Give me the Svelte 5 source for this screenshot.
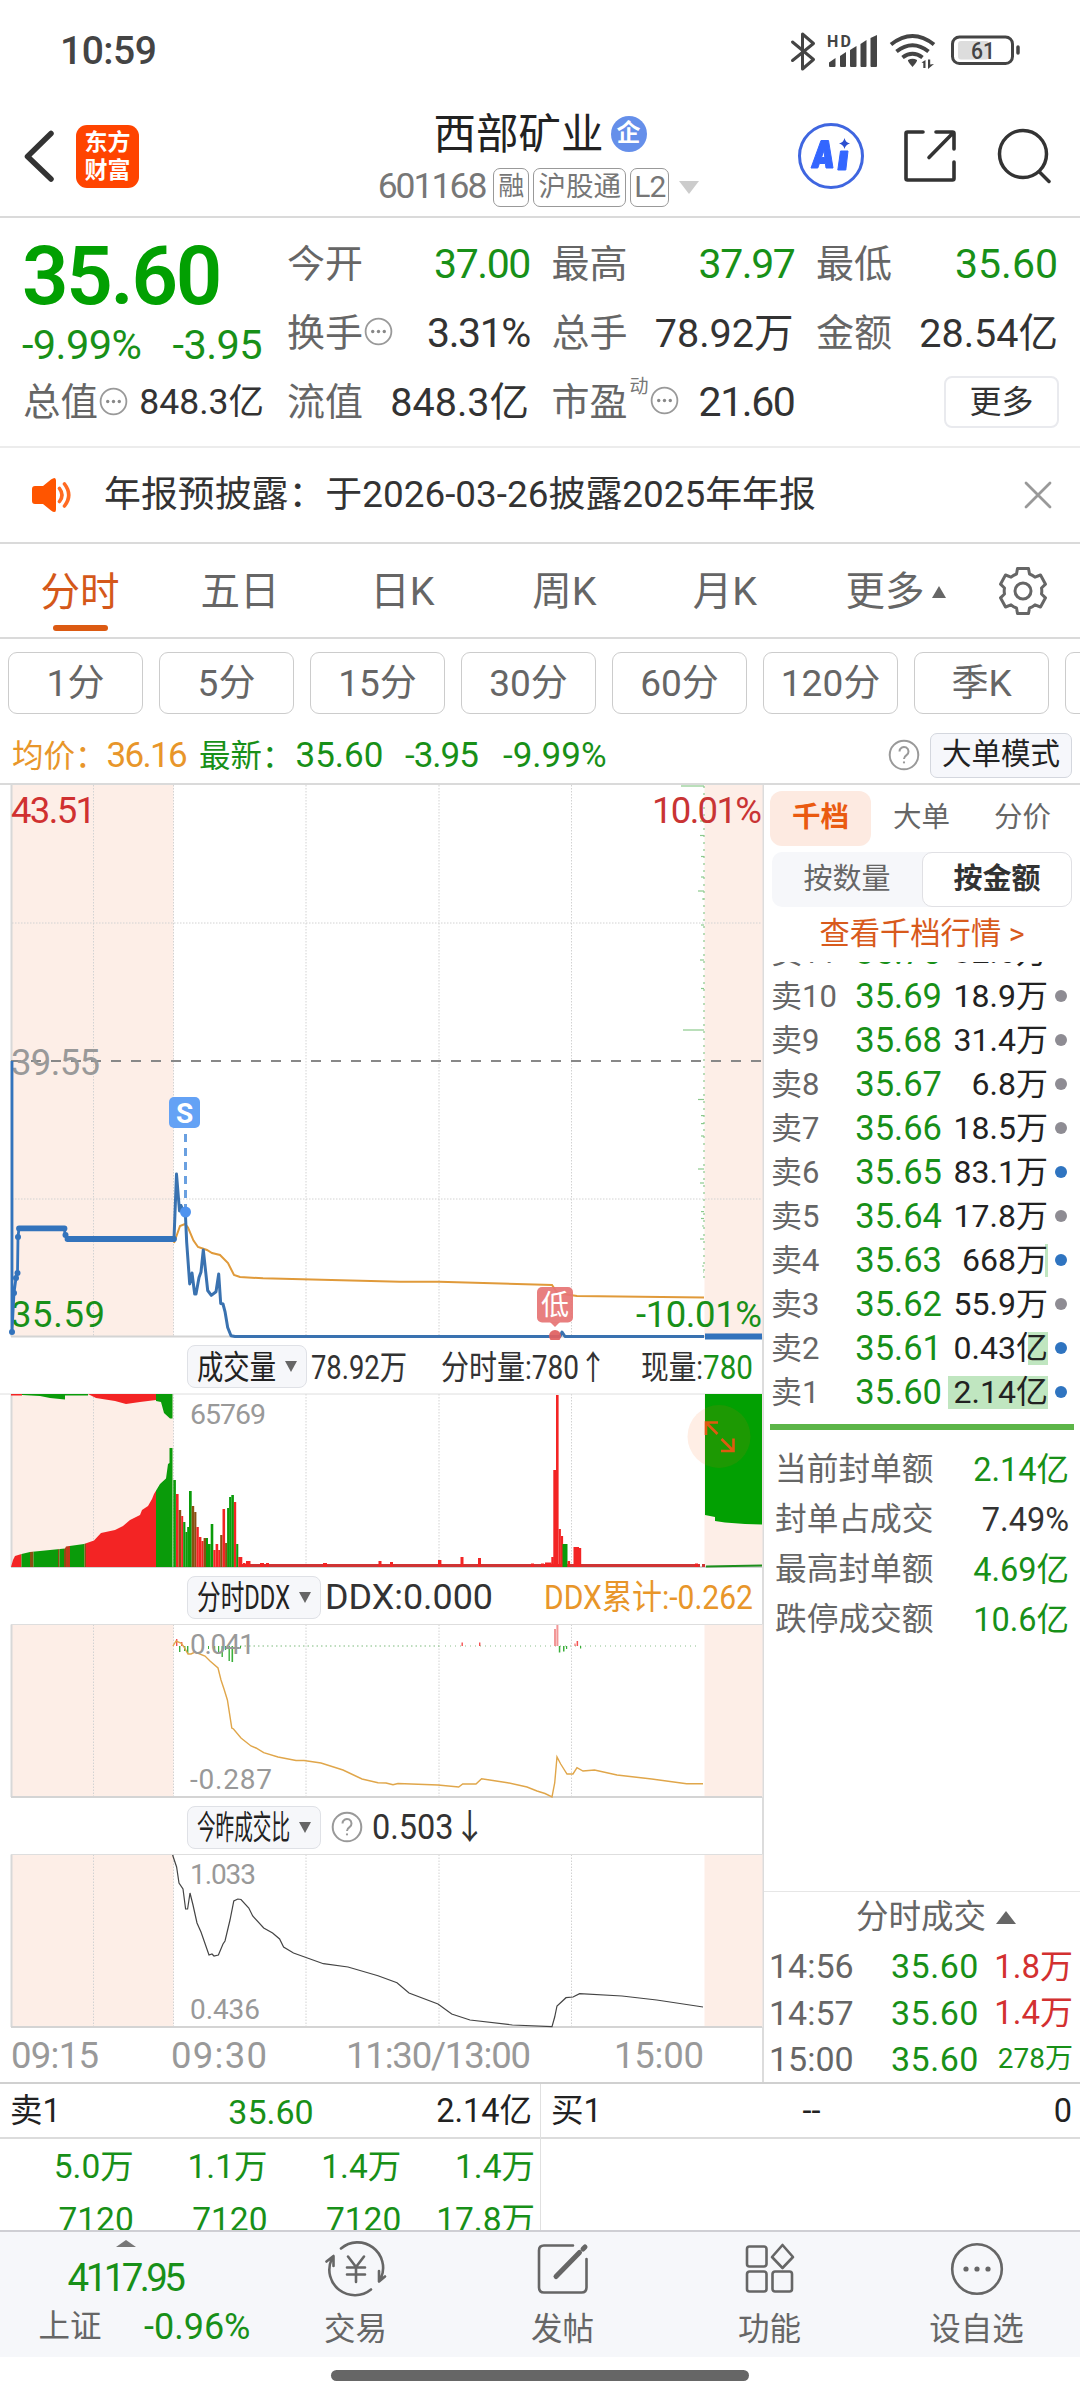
<script lang="ts">
    type Bar = [number, number, number, string];

    // --- Quote header ---
    const quotes = [
        { label: '今开', value: '37.00', tone: 'down', tight: true },
        { label: '最高', value: '37.97', tone: 'down', tight: true },
        { label: '最低', value: '35.60', tone: 'down' },
        { label: '换手', value: '3.31%', tone: 'dark', tight: true, hint: true },
        { label: '总手', value: '78.92万', tone: 'dark' },
        { label: '金额', value: '28.54亿', tone: 'dark' },
        { label: '流值', value: '848.3亿', tone: 'dark' },
        { label: '市盈', value: '21.60', tone: 'dark', tight: true, hint: true, sup: '动' }
    ];

    const periods = ['五日', '日K', '周K', '月K'];
    const minutes = ['1分', '5分', '15分', '30分', '60分', '120分', '季K', ''];

    // --- Order book ---
    const asks = [
        { n: 11, price: '35.70', amount: '32.6万', big: false, depth: 0 },
        { n: 10, price: '35.69', amount: '18.9万', big: false, depth: 0 },
        { n: 9, price: '35.68', amount: '31.4万', big: false, depth: 0 },
        { n: 8, price: '35.67', amount: '6.8万', big: false, depth: 0 },
        { n: 7, price: '35.66', amount: '18.5万', big: false, depth: 0 },
        { n: 6, price: '35.65', amount: '83.1万', big: true, depth: 0 },
        { n: 5, price: '35.64', amount: '17.8万', big: false, depth: 0 },
        { n: 4, price: '35.63', amount: '668万', big: true, depth: 3 },
        { n: 3, price: '35.62', amount: '55.9万', big: false, depth: 0 },
        { n: 2, price: '35.61', amount: '0.43亿', big: true, depth: 20 },
        { n: 1, price: '35.60', amount: '2.14亿', big: true, depth: 100 }
    ];

    const limits = [
        { label: '当前封单额', value: '2.14亿', tone: 'down' },
        { label: '封单占成交', value: '7.49%', tone: 'dark' },
        { label: '最高封单额', value: '4.69亿', tone: 'down' },
        { label: '跌停成交额', value: '10.6亿', tone: 'down' }
    ];

    const ticks = [
        { time: '14:56', price: '35.60', amount: '1.8万', tone: 'up' },
        { time: '14:57', price: '35.60', amount: '1.4万', tone: 'up' },
        { time: '15:00', price: '35.60', amount: '278万', tone: 'down', small: true }
    ];

    const queue = ['5.0万', '1.1万', '1.4万', '1.4万', '7120', '7120', '7120', '17.8万'];

    // --- Charts ---
    const gridX = [93.5, 173.5, 306, 439, 571.5];

    const avgLine =
        '174,1243 180,1226 185,1224 188,1227.6 193.5,1240.6 198,1247 207,1250 212,1253 220,1255 228,1263 234,1275 240,1277 263,1278.3 400,1281.7 439,1281.7 552,1285 556,1291 560,1293.6 577,1296 704,1297.4';
    const auctionLine =
        '12,1061 12,1332 14,1293 16,1278 17.5,1273 18,1237 19,1228.4 64.5,1228.4 65,1235 67.5,1239 174,1239';
    const priceLine =
        '174,1239 176.5,1174 179.5,1211 181,1205.5 185.5,1216.5 186.7,1242.5 189.7,1284 192,1273 194.7,1294 196,1294 199,1277.6 201,1272 203.3,1250 207.7,1290.5 211.3,1295.4 216,1291.7 218.7,1274 220.7,1303.5 223,1304 225,1311.6 227.7,1327.5 231,1335.7 235,1336.5 560,1336.5 562,1332 565,1336.5 704,1336.5';
    const ddxLine =
        '173,1646 176,1641 181,1643 184,1647 188,1654 191,1654 195,1652 205,1656 210,1661 218,1668 221,1680 224,1689 227.4,1700 231.8,1728 233.5,1729 241,1738 251,1746 256,1748 263.7,1752.7 278,1757 296,1760.5 304,1760.5 321,1763 343,1770 362,1779 378,1782.7 386,1783 393,1784.7 398,1783.5 438,1785 458.7,1787 462.7,1784 476,1784 481.6,1778.7 507.5,1782.7 527,1787 537,1791 545,1793.5 552,1797 554.7,1783 557,1757 560.7,1764 567,1774 573,1774 577,1767.7 583,1771 594.5,1770 617,1775 651.7,1779 686.6,1783.7 703,1783.7';
    const ratioLine =
        '172.6,1855 176.6,1867 179,1883 183,1889 185.6,1909 187.6,1909 190,1893 193,1905 197,1923 201,1932 209,1955 212,1954 214,1956 218.4,1955 223,1944 225,1941 230,1920 233.8,1901 237.8,1899 241,1899.5 248.8,1908 252.7,1916 263.7,1928 272.6,1933 279.6,1939 283.6,1947 293.5,1953 323.4,1963.7 348,1967 378,1975.7 397,1982.7 409,1993 438,2004 451.7,2014 470,2020 512.4,2025 552,2026.7 554.7,2017 557,2006 566,1997.7 573,1997 579.6,1993.7 622,1996 656.7,2000 696.5,2006 703,2007';

    const red = '#f32424';
    const green = '#0a9b0a';
    const mixed = '#8a4f12';

    // x, width, top, colour; every bar stands on the 1567 baseline
    const volumeBars: Bar[] = [
        [173.3, 2.6, 1480, green], [176, 2.6, 1494, red], [178.6, 2.6, 1510, mixed], [181.2, 2, 1516, red],
        [183.2, 2.2, 1522, green], [185.4, 2, 1532, green], [187.2, 2, 1527, green], [189, 2.7, 1491, green],
        [191.7, 2.5, 1506, mixed], [194.2, 2.2, 1512, mixed], [196.4, 2.4, 1527, red], [198.8, 2.6, 1537, red],
        [201.4, 2.2, 1541, red], [203.6, 2.4, 1538, mixed], [206, 2, 1538, green], [208, 2.7, 1544, green],
        [210.7, 2.6, 1524, green], [213.3, 2.3, 1550, red], [215.6, 2.6, 1544, red], [218.2, 2, 1550, red],
        [220.2, 2.3, 1535, mixed], [222.5, 2.6, 1509, red], [225.1, 2, 1543, mixed], [227.1, 2, 1508, green],
        [229.1, 2.2, 1497, green], [231.3, 2.6, 1495, green], [233.9, 2.3, 1502, red], [236.2, 2.1, 1544, green],
        [238.3, 4, 1557, red], [243, 2.5, 1563, red], [246, 4.5, 1561, red], [260, 4, 1563, red], [266, 3, 1563, red],
        [323, 4, 1563, red], [378.5, 3, 1561, red], [390, 3, 1562, red], [438, 3.4, 1560, red], [460.5, 3, 1557, red],
        [478, 3, 1558, red], [531, 3, 1563.5, red], [541, 3, 1563.5, red], [545, 6.5, 1562.5, red], [551.3, 2.5, 1557, red],
        [553.3, 2.7, 1470, red], [556, 2.6, 1395, red], [558.6, 2.3, 1529, red], [560.9, 2.2, 1536, red],
        [562.5, 5, 1544, green], [567.5, 2.6, 1561, red], [573.5, 5.5, 1547, red], [579, 2.2, 1548, red], [695, 3, 1563.5, red]
    ];

    // colour bands of the opening auction, clipped by its contour
    const auctionBands: [number, number, string][] = [
        [11, 10.5, red], [21.5, 8.5, green], [30, 3.5, mixed], [33.5, 24.5, green], [58, 1.5, mixed], [59.5, 4.5, green],
        [64, 2, mixed], [66, 4, '#c2361a'], [70, 14.5, green], [84.5, 1.5, mixed], [86, 70, red], [156, 17, green]
    ];

    const ddxBars: Bar[] = [
        [179, 1.4, 1652, green], [184, 1.4, 1651, green], [187, 1.4, 1654, green], [208, 1, 1649, green], [214, 1.2, 1650, green],
        [218, 1.2, 1652, green], [221.5, 1.4, 1657, green], [225, 1.2, 1650, green], [228.5, 1.4, 1661, green], [231.5, 1.6, 1662, green],
        [235.5, 1.2, 1650, green], [240, 1, 1648.5, green], [176, 1.4, 1639, red], [181, 1.4, 1642, red], [461.5, 1.4, 1642.5, red],
        [479, 1.4, 1642.5, red], [554, 2, 1629, '#ef7d7d'], [556.4, 2, 1625, '#ef7d7d'], [558.8, 1.5, 1652.5, green],
        [563, 1.5, 1651.5, green], [566, 1.2, 1649, green], [574.5, 1, 1643.5, red], [576.6, 1.5, 1641, red], [580, 1.2, 1648.5, green]
    ];

    // y, length of the price distribution marks next to the 15:00 line
    const marks: [number, number][] = [
        [786, 23], [821, 4], [835.5, 4], [856.5, 3], [877, 3], [891, 6], [899, 2], [925, 3], [960, 4], [988.5, 3], [1030, 21],
        [1099.5, 6], [1115.6, 3], [1123.6, 3], [1136, 3], [1169, 6], [1183, 4], [1211.6, 3], [1218.5, 3], [1226, 2],
        [1239, 4], [1266, 2], [1272, 1]
    ];
</script>

{#snippet fit(text: string, width: number, size: number, tone: string)}
    <svg class="fit {tone}" {width} height="44" viewBox="0 0 {width} 44">
        <text x="0" y="33.5" font-size={size} textLength={width} lengthAdjust="spacingAndGlyphs">{text}</text>
    </svg>
{/snippet}

{#snippet dots()}
    <svg class="dots" width="29" height="29" viewBox="0 0 29 29">
        <circle cx="14.5" cy="14.5" r="12.9" fill="none" stroke="#999" stroke-width="1.8" />
        <g fill="#888"><circle cx="8.7" cy="14.5" r="1.7" /><circle cx="14.5" cy="14.5" r="1.7" /><circle cx="20.3" cy="14.5" r="1.7" /></g>
    </svg>
{/snippet}

{#snippet help()}
    <svg class="help" width="32" height="32" viewBox="0 0 32 32" fill="none" stroke="#999" stroke-width="2">
        <circle cx="16" cy="16" r="14.3" />
        <path d="M11.5 12.5a4.5 4.5 0 1 1 7 3.7c-1.8 1.2-2.5 2-2.5 3.8" />
        <circle cx="16" cy="23.4" r="1.1" fill="#999" stroke="none" />
    </svg>
{/snippet}

{#snippet frame(top: number, bottom: number)}
    <rect x="12" y={top} width="161.5" height={bottom - top} fill="#fdeee7" />
    <rect x="704.5" y={top} width="58" height={bottom - top} fill="#fdeee7" />
    <g stroke="#d2d2d2" stroke-dasharray="1.5 1.5">
        {#each gridX as x}
            <line x1={x} x2={x} y1={top} y2={bottom} />
        {/each}
    </g>
    <path d="M11.5 {top}V{bottom}" stroke="#d8d8d8" stroke-width="2" />
    <path d="M11 {bottom}H762" stroke="#d4d4d4" stroke-width="2" />
{/snippet}

<div class="screen">
    <div class="status">
        <span class="clock">10:59</span>
        <svg width="232" height="42" viewBox="788 30 232 42" fill="none" stroke="#444" stroke-width="3" stroke-linecap="round" stroke-linejoin="round">
            <path d="M792.5 42 813.5 59.5 802.5 69V34L813.5 43.5 792.5 60.5" />
            <g fill="#444" stroke="none">
                <path d="M829 62.5 835.5 58V66q0 1-1 1h-4.500q-1 0-1-1zM840 56 846 52V66q0 1-1 1h-4q-1 0-1-1zM850 50 856.500 46V66q0 1-1 1h-4.500q-1 0-1-1zM860.500 44 866.500 40V66q0 1-1 1h-4q-1 0-1-1zM870.500 38 877 35V66q0 1-1 1h-4.500q-1 0-1-1z" />
                <text x="827" y="46.500" font-size="16" font-weight="700" textLength="24">HD</text>
                <path d="M908 60q4.500-2.500 9 0 .8 1-4.500 7-5.300-6-4.500-7z" />
                <path d="M921.500 62.500l4-2.500v8h-2.200v-5zM928 59.500h2.200v5l3.800-.5-6 5z" />
            </g>
            <g stroke-width="4" stroke-linecap="butt">
                <path d="M891 44.500q21.500-17 43 0M896.500 51.500q16-12.500 32 0M902.500 57.500q10-7.500 20 0" />
            </g>
            <rect x="952.500" y="37" width="60" height="26.500" rx="7" />
            <rect x="958" y="41" width="31" height="18.500" rx="3" fill="#ddd" stroke="none" />
            <text x="971" y="58.500" font-size="23" font-weight="500" fill="#444" stroke="none" textLength="24" lengthAdjust="spacingAndGlyphs">61</text>
            <path d="M1018 47v6" stroke-width="3.500" />
        </svg>
    </div>

    <header class="topbar">
        <div class="side">
            <svg width="34" height="56" viewBox="0 0 34 56" fill="none" stroke="#333" stroke-width="5.500" stroke-linecap="round" stroke-linejoin="round">
                <path d="M29 5.500 5.500 28.500 29 51" />
            </svg>
            <div class="logo"><span>东方</span><span>财富</span></div>
        </div>
        <div class="title">
            <div class="name">西部矿业<i>企</i></div>
            <div class="code">
                <span class="digits">601168</span>
                <b>融</b><b class="wide">沪股通</b><b class="lv">L2</b>
                <svg width="20" height="13" viewBox="0 0 20 13"><path d="M0 0h20L10 13z" fill="#ccc" /></svg>
            </div>
        </div>
        <div class="tools">
            <svg width="68" height="68" viewBox="0 0 68 68">
                <circle cx="34" cy="34" r="31.500" fill="none" stroke="#3f66e0" stroke-width="3" />
                <path d="M14 46 24 18.500h7.500L36 46h-7l-.6-4.500h-6L20.800 46zM24.500 35.500h3.300l-.8-7z" fill="#3366ff" fill-rule="evenodd" stroke="#3366ff" stroke-width="1" stroke-linejoin="round" />
                <path d="M43.500 29h7.500l-2.200 19h-8z" fill="#3366ff" stroke="#3366ff" stroke-width="1" stroke-linejoin="round" />
                <path d="M47.500 16q1 4.500 5.500 5.500-4.500 1-5.500 5.500-1-4.500-5.500-5.500 4.500-1 5.500-5.500z" fill="#2c4fd0" />
            </svg>
            <svg width="56" height="56" viewBox="0 0 56 56" fill="none" stroke="#333" stroke-width="3.600" stroke-linecap="round" stroke-linejoin="round">
                <path d="M21 4H5.500Q4 4 4 5.500v45Q4 52 5.500 52h45q1.500 0 1.500-1.500V34M34 4h16.500Q52 4 52 5.500V21M51 5 27 29.500" />
            </svg>
            <svg width="56" height="58" viewBox="0 0 56 58" fill="none" stroke="#333" stroke-width="3.500" stroke-linecap="round">
                <circle cx="28" cy="27" r="23.500" /><path d="M44.500 45 54 54.500" />
            </svg>
        </div>
    </header>

    <section class="quote">
        <div class="last">
            <div class="price">35.60</div>
            <div class="change"><span>-9.99%</span><span>-3.95</span></div>
            <div class="cap"><span class="lbl">总值</span>{@render dots()}<span class="val">848.3亿</span></div>
        </div>
        <div class="grid">
            {#each quotes as q}
                <div class="cell">
                    <span class="lbl">{q.label}</span>
                    {#if q.sup}<sup>{q.sup}</sup>{/if}
                    {#if q.hint}{@render dots()}{/if}
                    <span class="val {q.tone}" class:tight={q.tight} class:cjk={/[万亿]/.test(q.value)}>{q.value}</span>
                </div>
            {/each}
            <div class="cell more"><button>更多</button></div>
        </div>
    </section>

    <section class="notice">
        <svg width="42" height="36" viewBox="0 0 42 36">
            <path d="M1 12q0-3 3-3h8L20 2.500q5-3.500 5 1v29q0 4.500-5 1L12 27H4q-3 0-3-3z" fill="#ff5500" />
            <path d="M28.500 11.500q5 6.500 0 13M33.500 7q8.500 11 0 22" fill="none" stroke="#ff6a22" stroke-width="3.600" stroke-linecap="round" />
        </svg>
        <p>年报预披露：于2026-03-26披露2025年年报</p>
        <svg width="28" height="28" viewBox="0 0 28 28" stroke="#999" stroke-width="2.800" stroke-linecap="round"><path d="M2 2 26 26M26 2 2 26" /></svg>
    </section>

    <nav class="periods">
        <span class="active">分时</span>
        {#each periods as p}
            <span>{p}</span>
        {/each}
        <span class="drop">更多<svg width="14" height="12" viewBox="0 0 14 12"><path d="M7 0 14 12H0z" fill="#666" /></svg></span>
        <svg class="gear" width="50" height="50" viewBox="-25 -25 50 50" fill="none" stroke="#666" stroke-width="3" stroke-linejoin="round">
            <path d="M-5.500-22.500h11l1 5.500q3 1 5.500 3.200l5.500-2.200 5 9.200-4 3.800q.6 3 0 6l4 3.800-5 9.200-5.500-2.200q-2.500 2.200-5.500 3.200l-1 5.500h-11l-1-5.500q-3-1-5.500-3.200l-5.500 2.200-5-9.200 4-3.800q-.6-3 0-6l-4-3.800 5-9.200 5.500 2.200q2.500-2.200 5.500-3.200z" />
            <circle r="8" />
        </svg>
    </nav>

    <div class="minutes">
        {#each minutes as m}
            <button>{m}</button>
        {/each}
    </div>

    <div class="info">
        <span class="avg">均价：<em>36.16</em></span>
        <span class="down now">最新：<em>35.60</em></span>
        <em class="down diff">-3.95</em>
        <em class="down">-9.99%</em>
        <span class="grow"></span>
        {@render help()}
        <button>大单模式</button>
    </div>

    <main>
        <div class="charts">
            <svg class="plot" width="763" height="555" viewBox="0 785 763 555">
                {@render frame(785, 1336.5)}
                <g stroke="#d2d2d2" stroke-dasharray="1.500 1.500"><path d="M12 923H762M12 1199H762" /></g>
                <path d="M11 1061H762" stroke="#888" stroke-width="2" stroke-dasharray="10 10" />
                <g stroke="#8cc98c" stroke-width="1.200">
                    <line x1="704" x2="704" y1="786" y2="1280" stroke-dasharray="2 5" />
                    {#each marks as [y, len]}
                        <line x1={704 - len} x2="704" y1={y} y2={y} />
                    {/each}
                </g>
                <g font-size="36.500">
                    <text x="11" y="822.500" fill="#d03030" textLength="85">43.51</text>
                    <text x="652" y="823" fill="#c93434" textLength="110">10.01%</text>
                    <text x="11" y="1075" fill="#999" textLength="89">39.55</text>
                    <text x="11" y="1327" fill="#189018" textLength="94">35.59</text>
                    <text x="636" y="1326.500" fill="#189018" textLength="126">-10.01%</text>
                </g>
                <polyline points={avgLine} fill="none" stroke="#e09a3a" stroke-width="2" />
                <polyline points={auctionLine} fill="none" stroke="#3373bc" stroke-width="2.800" stroke-linejoin="round" />
                <path d="M19 1228.400H64.500M67.500 1239H174" stroke="#3373bc" stroke-width="5.800" stroke-linecap="round" />
                <g fill="#3373bc">
                    <circle cx="12" cy="1332" r="3" /><circle cx="14" cy="1293" r="3" /><circle cx="16" cy="1278" r="3" />
                    <circle cx="17.500" cy="1273" r="3" /><circle cx="18" cy="1237" r="3" /><circle cx="65.500" cy="1235" r="3" />
                </g>
                <polyline points={priceLine} fill="none" stroke="#3a72b0" stroke-width="3" stroke-linejoin="round" />
                <path d="M705 1336.500H762" stroke="#3373bc" stroke-width="6" />
                <path d="M185.500 1134V1210" stroke="#6aa0e0" stroke-width="3" stroke-dasharray="8 6" />
                <circle cx="185.500" cy="1212" r="5.500" fill="#4f93ef" />
                <rect x="169" y="1097" width="31" height="31" rx="5" fill="#64a2f5" />
                <text x="184.500" y="1122.500" font-size="28" font-weight="700" fill="#fff" text-anchor="middle">S</text>
                <g fill="#e67575" fill-opacity="0.930">
                    <rect x="537" y="1287" width="36" height="35.500" rx="5" />
                    <path d="M550 1322h10l-5 5z" />
                    <circle cx="555" cy="1336" r="6" fill="#e06060" />
                </g>
                <text x="555" y="1315" font-size="28" fill="#fff" text-anchor="middle">低</text>
            </svg>

            <div class="head">
                <span class="pick">{@render fit('成交量', 79, 33, 'black')}<i></i></span>
                {@render fit('78.92万', 96, 33.5, 'dark')}
                <span class="gap-a"></span>
                {@render fit('分时量:780↑', 166, 33.5, 'dark')}
                <span class="grow"></span>
                {@render fit('现量:', 62, 33.5, 'dark')}
                {@render fit('780', 50, 34, 'down')}
            </div>
            <svg class="plot" width="763" height="178" viewBox="0 1393 763 178">
                {@render frame(1394, 1567)}
                <path d="M0 1394H762" stroke="#dedede" />
                <clipPath id="auction">
                    <path d="M11 1567 13 1560 15 1556 21.500 1554 30 1552 50 1550 65 1548.500 66 1546.500 84 1544 94 1540.500 101 1533 115 1530 123 1526 130 1520 140 1515 142 1510 148 1506 152 1499 154 1494 157 1489 160 1484 166 1478.500 168 1464 169.500 1463V1448H172.500V1567z" />
                </clipPath>
                <g clip-path="url(#auction)">
                    {#each auctionBands as [x, w, fill]}
                        <rect {x} y="1440" width={w} height="127" {fill} />
                    {/each}
                </g>
                <path d="M11 1394H22V1395.500H11zM88 1394H156V1400L140 1402 126 1404 115 1401 96 1398z" fill={red} />
                <path d="M22 1394H65V1399.500L50 1398 40 1396 22 1395zM65 1394H88V1395.500H65zM156 1394H172.500V1418.500H170L164 1413 161 1402 156 1401z" fill={green} />
                <path d="M240 1565.500H700M702 1565.500H705" stroke="#cf3434" stroke-width="3" />
                {#each volumeBars as [x, w, y, fill]}
                    <rect {x} {y} width={w} height={1567 - y} {fill} />
                {/each}
                <path d="M705 1394H762V1524.500L745 1524 725 1522.500 715 1521V1517L705 1515z" fill="#02a002" />
                <path d="M706 1566.500 762 1565.500" stroke="#1c8f1c" stroke-width="2" />
                <circle cx="719" cy="1436.500" r="31.500" fill="#ff6010" fill-opacity="0.110" />
                <path d="M717.500 1434 706 1422.500M706 1435V1422.500H718M721.500 1439 733.500 1451M733.500 1438.500V1451H721" fill="none" stroke="#df5a10" stroke-width="2.600" />
                <text x="190" y="1424" font-size="28.500" fill="#999" textLength="76">65769</text>
            </svg>

            <div class="head">
                <span class="pick">{@render fit('分时DDX', 93, 33, 'black')}<i></i></span>
                {@render fit('DDX:0.000', 168, 34.5, 'dark')}
                <span class="grow"></span>
                {@render fit('DDX累计:-0.262', 209, 34, 'orange')}
            </div>
            <svg class="plot" width="763" height="178" viewBox="0 1623 763 178">
                {@render frame(1624.500, 1797)}
                <path d="M11 1624.500H762" stroke="#dedede" />
                <path d="M240 1646H440" stroke="#7dbb7d" stroke-dasharray="1.500 3" />
                <path d="M445 1646H700" stroke="#8cc08c" stroke-dasharray="1 4" />
                {#each ddxBars as [x, w, y, fill]}
                    <rect {x} y={Math.min(y, 1646)} width={w} height={Math.abs(y - 1646)} {fill} opacity="0.800" />
                {/each}
                <polyline points={ddxLine} fill="none" stroke="#e0a64a" stroke-width="1.400" />
                <text x="190" y="1653.500" font-size="28" fill="#999" textLength="65">0.041</text>
                <text x="190" y="1789" font-size="28" fill="#999" textLength="82">-0.287</text>
            </svg>

            <div class="head">
                <span class="pick">{@render fit('今昨成交比', 93, 33, 'black')}<i></i></span>
                {@render help()}
                {@render fit('0.503↓', 114, 34.5, 'dark')}
            </div>
            <svg class="plot" width="763" height="228" viewBox="0 1853 763 228">
                {@render frame(1854.500, 2027)}
                <path d="M11 1854.500H762" stroke="#dedede" />
                <polyline points={ratioLine} fill="none" stroke="#444" stroke-width="1.200" />
                <g font-size="28" fill="#999">
                    <text x="190" y="1884" textLength="66">1.033</text>
                    <text x="190" y="2019" textLength="70">0.436</text>
                </g>
                <g font-size="36.500" fill="#999">
                    <text x="11" y="2068" textLength="88">09:15</text>
                    <text x="171" y="2068" textLength="96">09:30</text>
                    <text x="346" y="2068" textLength="185">11:30/13:00</text>
                    <text x="614" y="2068" textLength="90">15:00</text>
                </g>
            </svg>
        </div>

        <aside>
            <div class="tabs"><span class="active">千档</span><span>大单</span><span>分价</span></div>
            <div class="switch"><span>按数量</span><span class="active">按金额</span></div>
            <a class="link" href="#book">查看千档行情 &gt;</a>
            <ul class="book">
                {#each asks as a (a.n)}
                    <li>
                        <span class="lv">卖{a.n}</span>
                        <span class="px">{a.price}</span>
                        <span class="amt"><i style="width: {a.depth}px"></i><b>{a.amount}</b></span>
                        <span class="dot" class:big={a.big}></span>
                    </li>
                {/each}
            </ul>
            <div class="rule"></div>
            <ul class="limits">
                {#each limits as l}
                    <li><span>{l.label}</span><b class={l.tone}>{l.value}</b></li>
                {/each}
            </ul>
            <div class="trades">
                <h3>分时成交<svg width="20" height="13" viewBox="0 0 20 13"><path d="M10 0 20 13H0z" fill="#666" /></svg></h3>
                {#each ticks as t}
                    <div class="tick">
                        <span>{t.time}</span><span class="down px">{t.price}</span><span class="qty {t.tone}" class:small={t.small}>{t.amount}</span>
                    </div>
                {/each}
            </div>
        </aside>
    </main>

    <section class="level">
        <div class="half">
            <div class="best"><span>卖1</span><span class="down mid">35.60</span><span>2.14亿</span></div>
            <div class="queue">
                {#each queue as q}
                    <span>{q}</span>
                {/each}
            </div>
        </div>
        <div class="half">
            <div class="best"><span>买1</span><span class="mid">--</span><span>0</span></div>
        </div>
    </section>

    <footer>
        <div class="index">
            <svg width="20" height="7" viewBox="0 0 20 7"><path d="M10 0 20 7H0z" fill="#777" /></svg>
            <strong>4117.95</strong>
            <div><span>上证</span><em>-0.96%</em></div>
        </div>
        <div class="item">
            <svg width="62" height="56" viewBox="-31 -28 62 56" fill="none" stroke="#666" stroke-width="2.600" stroke-linecap="round" stroke-linejoin="round">
                <path d="M-15-20.500A25.500 25.500 0 0 1 25 9M29 7.500 23 12.500V2M15 20.500A25.500 25.500 0 0 1-24.500-9.500M-29.500-7.500-22.500-13V-3" />
                <path d="M-8-12.500 0-2 8-12.500M0-2V13M-9-1.500H9M-9 5.500H9" />
            </svg>
            <span>交易</span>
        </div>
        <div class="item">
            <svg width="56" height="56" viewBox="-28 -28 56 56" fill="none" stroke="#666" stroke-width="2.600" stroke-linecap="round" stroke-linejoin="round">
                <path d="M10-23.500H-19Q-24-23.500-24-18.500V18.500Q-24 23.500-19 23.500H18.500Q23.500 23.500 23.500 18.500V-10" />
                <path d="M-7 7.500 16.500-16.500" stroke-width="5" /><path d="M20-20 22-22" stroke-width="5" />
            </svg>
            <span>发帖</span>
        </div>
        <div class="item">
            <svg width="56" height="56" viewBox="-28 -28 56 56" fill="none" stroke="#666" stroke-width="2.600" stroke-linejoin="round">
                <rect x="-23" y="-22.500" width="19.500" height="20" rx="2.500" /><rect x="-23" y="2.500" width="19.500" height="20" rx="2.500" />
                <rect x="2.500" y="2.500" width="19.500" height="20" rx="2.500" /><path d="M12.500-24 23-12 12.500-1 2-12z" />
            </svg>
            <span>功能</span>
        </div>
        <div class="item">
            <svg width="56" height="56" viewBox="-28 -28 56 56">
                <circle r="24.800" fill="none" stroke="#666" stroke-width="2.600" />
                <g fill="#666"><circle cx="-11" r="2.600" /><circle r="2.600" /><circle cx="11" r="2.600" /></g>
            </svg>
            <span>设自选</span>
        </div>
    </footer>
    <div class="home"><i></i></div>
</div>

<style>
    :global(body) {
        background: #fff;
    }

    .screen {
        width: 1080px;
        height: 2400px;
        overflow: hidden;
        display: flex;
        flex-direction: column;
        background: #fff;
        color: #333;
        font-family: Roboto, 'Noto Sans CJK SC', sans-serif;
        line-height: 1;
    }

    .screen :global(*) {
        box-sizing: border-box;
    }

    svg {
        display: block;
        flex: none;
    }

    .fit {
        overflow: visible;
    }

    button {
        font: inherit;
        color: inherit;
        background: none;
        padding: 0;
    }

    em,
    i,
    b {
        font-style: normal;
        font-weight: 400;
    }

    ul {
        list-style: none;
        margin: 0;
        padding: 0;
    }

    .down { color: #189018; fill: #189018; }
    .up { color: #d33030; }
    .dark { color: #333; fill: #333; }
    .black { fill: #222; }
    .orange { fill: #e8962a; }
    .grow { flex: 1; }

    /* --- status bar --- */
    .status {
        height: 102px;
        padding: 0 60px;
        display: flex;
        align-items: center;
        justify-content: space-between;
    }

    .clock {
        font-size: 39px;
        font-weight: 500;
        color: #444;
        letter-spacing: -0.5px;
    }

    /* --- top bar --- */
    .topbar {
        height: 116px;
        border-bottom: 2px solid #dadada;
        display: grid;
        grid-template-columns: 300px 1fr 300px;
    }

    .side {
        display: flex;
        align-items: center;
        gap: 20px;
        padding: 0 0 5px 22px;
        margin-top: 12px;
        height: 89px;
    }

    .logo {
        width: 63px;
        height: 63px;
        border-radius: 11px;
        background: #ff4400;
        color: #fff;
        font-size: 23px;
        font-weight: 700;
        display: flex;
        flex-direction: column;
        align-items: center;
        justify-content: center;
        gap: 5px;
    }

    .logo span {
        line-height: 23px;
        white-space: nowrap;
    }

    .title {
        display: flex;
        flex-direction: column;
        align-items: center;
        padding-top: 1px;
    }

    .name {
        height: 62px;
        padding-top: 2px;
        display: flex;
        align-items: center;
        gap: 7px;
        font-size: 42.5px;
        color: #222;
        white-space: nowrap;
    }

    .name i {
        width: 36px;
        height: 36px;
        margin-top: -2px;
        border-radius: 50%;
        background: #658fea;
        color: #fff;
        font-size: 24px;
        font-weight: 700;
        line-height: 34px;
        text-align: center;
    }

    .code {
        display: flex;
        align-items: center;
        gap: 4px;
        height: 44px;
        margin-left: -3px;
        font-size: 26px;
        color: #777;
    }

    .digits {
        font-size: 35.5px;
        letter-spacing: -2px;
        margin-right: 4px;
    }

    .code b {
        width: 36px;
        height: 39px;
        border: 1.5px solid #999;
        border-radius: 7px;
        line-height: 35px;
        text-align: center;
    }

    .code .wide { width: 93px; font-size: 27.5px; }
    .code .lv { width: 39px; font-size: 30px; letter-spacing: -1px; }
    .code svg { margin-left: 6px; }

    .tools {
        display: flex;
        align-items: center;
        gap: 37px;
        padding-left: 17px;
        height: 108px;
    }

    /* --- quote --- */
    .quote {
        height: 230px;
        display: flex;
        border-bottom: 2px solid #ececec;
    }

    .last {
        width: 265px;
        padding: 0 2px 0 24px;
        color: #189018;
    }

    .price {
        height: 92px;
        padding-top: 18px;
        margin-left: -2px;
        font-size: 81.5px;
        font-weight: 600;
        letter-spacing: -2.3px;
        color: #02a002;
    }

    .change {
        height: 57px;
        padding-top: 12px;
        display: flex;
        align-items: center;
        justify-content: space-between;
        margin-left: -2px;
        font-size: 41.5px;
        letter-spacing: -0.6px;
    }

    .cap {
        height: 69px;
        margin-top: 1px;
        display: flex;
        align-items: center;
    }

    .lbl {
        font-size: 38px;
        color: #666;
    }

    .cap .lbl { font-size: 37.5px; margin-left: -1px; }

    .dots { margin: -2px 0 0 1px; }

    .cap .val {
        margin-left: auto;
        margin-right: -2px;
        font-size: 35.5px;
        color: #333;
    }

    .grid {
        flex: 1;
        padding: 11px 24px 0 23px;
        display: grid;
        grid-template-columns: repeat(3, 240px);
        grid-template-rows: repeat(3, 69px);
        column-gap: 24.5px;
    }

    .cell {
        display: flex;
        align-items: center;
    }

    .cell .val {
        margin-left: auto;
        margin-right: -2px;
        padding-top: 2px;
        font-size: 41px;
    }

    .cell .tight {
        letter-spacing: -1.4px;
        margin-right: -3px;
    }

    .cell .cjk { font-size: 39.5px; }

    sup {
        align-self: flex-start;
        margin: 10px 0 0 2px;
        font-size: 19px;
        line-height: 20px;
        color: #777;
    }

    .more { justify-content: flex-end; }

    .more button {
        width: 115px;
        height: 52px;
        margin-right: -3px;
        border: 2px solid #e9eaee;
        border-radius: 8px;
        font-size: 32px;
    }

    /* --- notice --- */
    .notice {
        height: 96px;
        padding: 0 28px 0 31px;
        display: flex;
        align-items: center;
        border-bottom: 2px solid #dadada;
    }

    .notice p {
        flex: 1;
        margin: 1px 0 0 31px;
        font-size: 36.9px;
    }

    /* --- period tabs --- */
    .periods {
        height: 95px;
        display: grid;
        grid-template-columns: 160px 160px 165px 159px 162px 154px 1fr;
        align-items: center;
        justify-items: center;
        border-bottom: 2px solid #dadada;
        font-size: 39.5px;
        color: #666;
    }

    .periods span { padding-top: 2px; }

    .periods .active {
        height: 93px;
        display: flex;
        flex-direction: column;
        justify-content: space-between;
        align-items: center;
        color: #d4581a;
        padding: 29px 0 6px;
    }

    .periods .active::after {
        content: '';
        width: 55px;
        height: 6px;
        border-radius: 3px;
        background: #dc5a12;
    }

    .drop {
        display: flex;
        align-items: center;
        gap: 7px;
        margin-left: 25px;
    }

    .gear { margin-left: 6px; }

    .minutes {
        height: 76px;
        padding: 13px 0 0 8px;
        display: flex;
        gap: 16px;
        overflow: hidden;
    }

    .minutes button {
        flex: none;
        width: 135px;
        height: 62px;
        border: 1.5px solid #ccc;
        border-radius: 9px;
        font-size: 37px;
        color: #666;
    }

    /* --- price info line --- */
    .info {
        height: 70px;
        padding: 12px 8px 0 12px;
        display: flex;
        align-items: center;
        border-bottom: 2px solid #dadada;
        font-size: 31.5px;
        white-space: nowrap;
    }

    .info em { font-size: 35px; }
    .avg { width: 187px; color: #e8962a; letter-spacing: 0; }
    .avg em { letter-spacing: -1.7px; }
    .now { width: 206px; }
    .now em { margin-left: 2px; }
    .diff { width: 98px; letter-spacing: -1px; }

    .info button {
        width: 142px;
        height: 45px;
        margin-left: 10px;
        border: 1.5px solid #d4d7de;
        border-radius: 7px;
        background: #f6f7fb;
        font-size: 29.5px;
        color: #222;
    }

    /* --- charts --- */
    main {
        height: 1299px;
        display: flex;
        border-bottom: 2px solid #d0d0d0;
    }

    .charts {
        width: 764px;
        border-right: 2px solid #dcdcdc;
    }

    .head {
        height: 52px;
        padding: 0 9px 0 187px;
        display: flex;
        align-items: center;
    }

    .plot:first-child + .head { height: 53px; }

    .pick {
        height: 43px;
        padding: 0 9px 0 9px;
        margin-right: 4px;
        display: flex;
        align-items: center;
        gap: 9px;
        border: 1.5px solid #dfe1e6;
        border-radius: 8px;
        background: #f6f7fa;
    }

    .pick i {
        border: 6.5px solid transparent;
        border-top: 11px solid #666;
        border-bottom: 0;
    }

    .gap-a { width: 34px; }

    .head .help { margin: 0 9px 0 6px; }

    /* --- order book --- */
    aside {
        flex: 1;
        display: flex;
        flex-direction: column;
        font-size: 30px;
        color: #666;
    }

    .tabs {
        display: grid;
        grid-template-columns: 101px 101px 101px;
        margin: 6px 0 0 6px;
        height: 55px;
    }

    .tabs span {
        display: flex;
        align-items: center;
        justify-content: center;
        font-size: 28.5px;
    }

    .tabs .active {
        border-radius: 12px;
        background: #fdeae1;
        font-weight: 700;
        color: #ea5a10;
    }

    .switch {
        display: flex;
        width: 300px;
        height: 55px;
        margin: 6px 0 0 8px;
        border-radius: 10px;
        background: #f6f7fa;
    }

    .switch span {
        width: 150px;
        display: flex;
        align-items: center;
        justify-content: center;
        font-size: 29px;
        border-radius: 10px;
    }

    .switch .active {
        border: 1.5px solid #e0e0e4;
        background: #fff;
        font-weight: 700;
        color: #333;
    }

    .link {
        height: 54px;
        padding-top: 1px;
        display: flex;
        align-items: center;
        justify-content: center;
        font-size: 30.3px;
        color: #d85a1c;
        text-decoration: none;
    }

    .book {
        height: 457px;
        margin-top: 1px;
        display: flex;
        flex-direction: column;
        justify-content: flex-end;
        overflow: hidden;
        padding-bottom: 5px;
    }

    .book li {
        flex: none;
        height: 44px;
        padding: 0 13px 0 7px;
        display: flex;
        align-items: center;
    }

    .book .lv { width: 72px; font-size: 31px; white-space: nowrap; }
    .book .px { width: 99px; text-align: right; font-size: 34.5px; color: #189018; }

    .book .amt {
        position: relative;
        width: 106px;
        height: 33px;
        line-height: 33px;
        text-align: right;
        font-size: 32px;
        white-space: nowrap;
        color: #222;
    }

    .book .amt i {
        position: absolute;
        right: 0;
        top: 0;
        height: 33px;
        background: #c0e6c0;
    }

    .book .amt b { position: relative; }

    .dot {
        width: 12px;
        height: 12px;
        margin-left: auto;
        border-radius: 50%;
        background: #8e8c93;
    }

    .dot.big { background: #2f74c0; }

    .rule {
        height: 6px;
        margin: 5px 6px 0;
        background: #5cb548;
    }

    .limits { padding: 15px 11px 0 11px; }

    .limits li {
        height: 50px;
        display: flex;
        align-items: center;
        justify-content: space-between;
        font-size: 31.7px;
    }

    .limits b { font-size: 32.5px; }

    .trades {
        margin-top: auto;
        border-top: 1.5px solid #e6e6e6;
    }

    h3 {
        margin: 0;
        height: 51px;
        padding-left: 28px;
        display: flex;
        align-items: center;
        justify-content: center;
        gap: 10px;
        font-size: 32.5px;
        font-weight: 400;
    }

    .tick {
        height: 46.5px;
        padding: 1px 7px 0 5px;
        display: grid;
        grid-template-columns: 122px 90px 1fr;
        align-items: center;
        font-size: 34px;
    }

    .tick .px { letter-spacing: 0.5px; }

    .qty { text-align: right; font-size: 33px; }
    .qty.small { font-size: 28px; }

    /* --- level one quotes --- */
    .level {
        height: 148px;
        display: grid;
        grid-template-columns: 541px 1fr;
        overflow: hidden;
        border-bottom: 2px solid #cfcfd4;
    }

    .half:first-child { border-right: 1.5px solid #e0e0e0; }

    .best {
        height: 55px;
        padding: 2px 8px 0 10px;
        display: grid;
        grid-template-columns: 1fr 90px 1fr;
        align-items: center;
        border-bottom: 2px solid #dcdcdc;
        font-size: 32.5px;
        color: #222;
    }

    .best span:last-child { text-align: right; }
    .mid { text-align: center; }
    .best .mid.down { font-size: 34px; color: #189018; }

    .queue {
        width: 535px;
        display: grid;
        grid-template-columns: repeat(4, 1fr);
        grid-auto-rows: 53px;
        align-items: center;
        padding-top: 1px;
        text-align: right;
        font-size: 33.5px;
        color: #189018;
    }

    /* --- bottom bar --- */
    footer {
        height: 125px;
        display: grid;
        grid-template-columns: 252px repeat(4, 207px);
        background: #f6f7fa;
        color: #666;
        font-size: 31.5px;
    }

    .index {
        display: flex;
        flex-direction: column;
        align-items: center;
        padding-top: 8px;
    }

    .index strong {
        margin: 12px 0 0 -2px;
        font-size: 38.5px;
        font-weight: 400;
        letter-spacing: -3.6px;
        color: #189018;
    }

    .index div {
        width: 212px;
        margin: 11px 0 0 37px;
        display: flex;
        align-items: center;
        justify-content: space-between;
    }

    .index em {
        font-size: 36px;
        color: #189018;
    }

    .item {
        display: flex;
        flex-direction: column;
        align-items: center;
        gap: 17px;
        padding-top: 9px;
    }

    .home {
        flex: 1;
        display: flex;
        justify-content: center;
        padding-top: 13px;
    }

    .home i {
        width: 418px;
        height: 11px;
        border-radius: 6px;
        background: #666;
    }
</style>
